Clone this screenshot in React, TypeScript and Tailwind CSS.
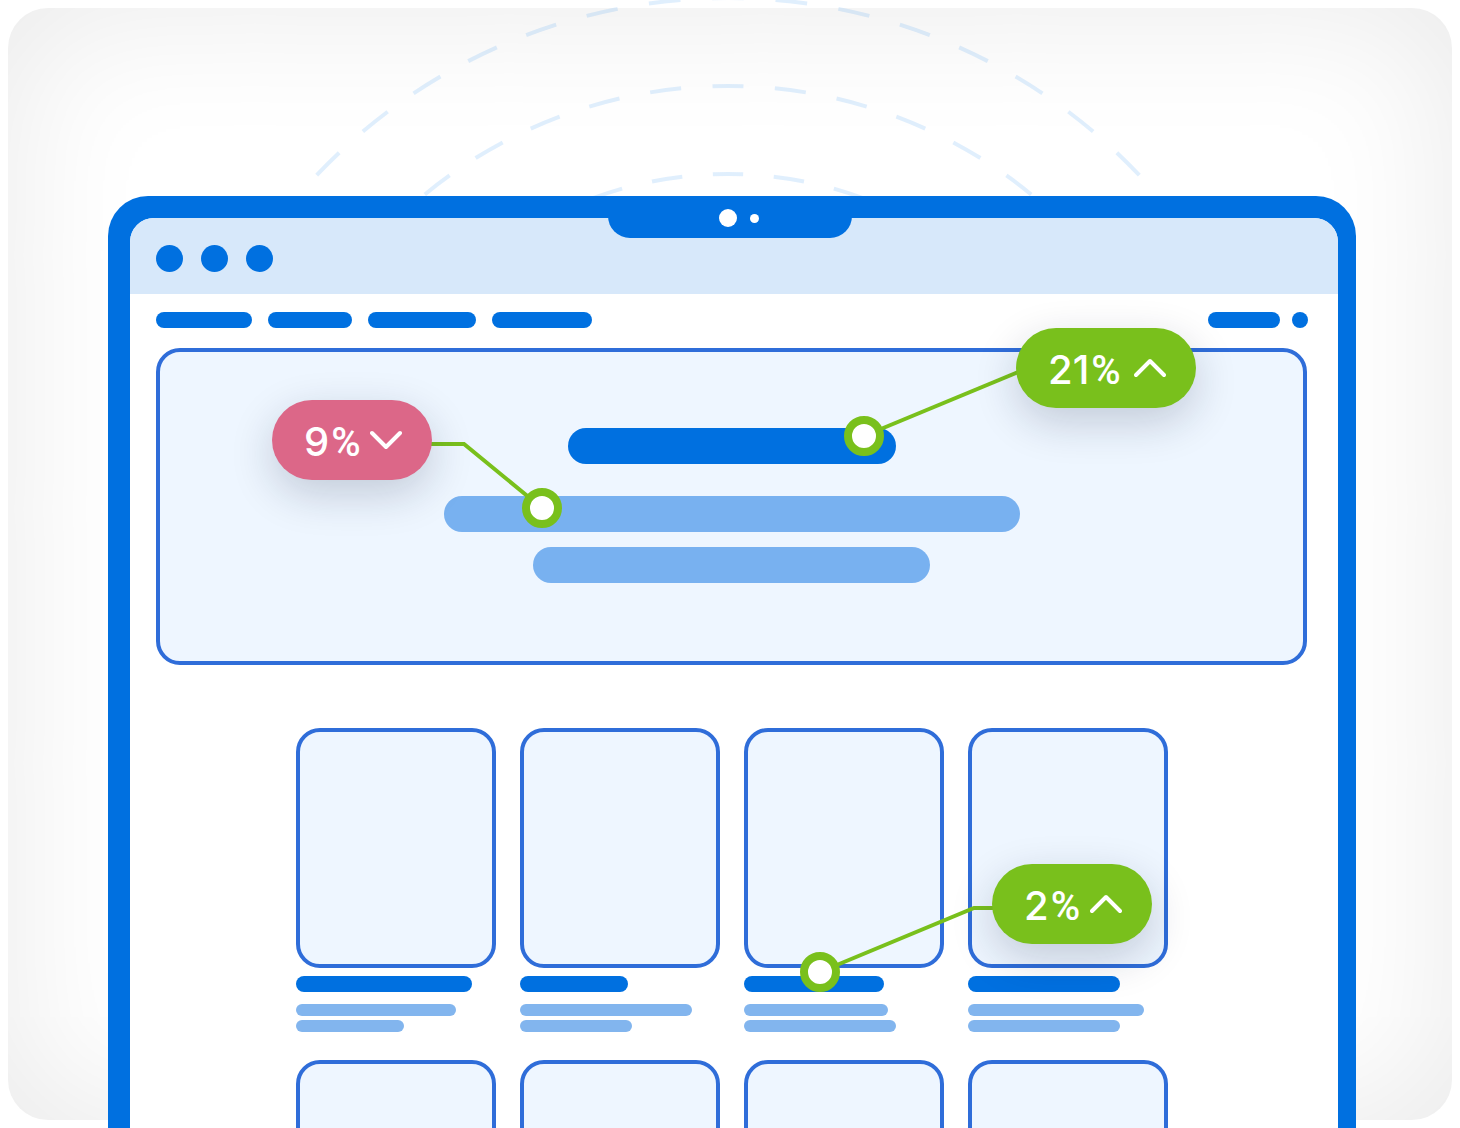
const CARDS = [
  { title: "w-[176px]", first: "w-[160px]", second: "w-[108px]" },
  { title: "w-[108px]", first: "w-[172px]", second: "w-[112px]" },
  { title: "w-[140px]", first: "w-[144px]", second: "w-[152px]" },
  { title: "w-[152px]", first: "w-[176px]", second: "w-[152px]" },
];

const NAV_ITEMS = ["w-[96px]", "w-[84px]", "w-[108px]", "w-[100px]"];

function Signals() {
  const rings = [
    { r: 390, units: 80 },
    { r: 478, units: 96 },
    { r: 566, units: 112 },
  ];
  return (
    <svg
      aria-hidden="true"
      className="absolute top-0 left-1/2 -translate-x-1/2"
      width="1460"
      height="400"
      viewBox="0 0 1460 400"
      fill="none"
    >
      {rings.map((ring) => (
        <circle
          key={ring.r}
          cx="728"
          cy="564"
          r={ring.r}
          pathLength={ring.units}
          strokeDasharray="1 1"
          strokeDashoffset="0.5"
          stroke="#0078ec"
          strokeOpacity="0.12"
          strokeWidth="4"
          transform="rotate(-90 728 564)"
        />
      ))}
    </svg>
  );
}

function Card({ title, first, second }: { title: string; first: string; second: string }) {
  return (
    <article className="flex flex-col">
      <div className="h-60 rounded-3xl border-4 border-[#2f6dd9] bg-[#eef6ff]" />
      <div className={`mt-2 h-4 rounded-full bg-[#0070e0] ${title}`} />
      <div className={`mt-3 h-3 rounded-full bg-[#82b5ee] ${first}`} />
      <div className={`mt-1 h-3 rounded-full bg-[#82b5ee] ${second}`} />
    </article>
  );
}

function Badge({ value, trend, place }: { value: string; trend: "up" | "down"; place: string }) {
  const tone = trend === "up" ? "bg-[#79c01c]" : "bg-[#dc6788]";
  return (
    <div
      className={`absolute flex h-20 items-center justify-between rounded-full pr-[30px] pl-8 shadow-[0_14px_44px_rgba(20,30,60,0.2)] ${tone} ${place}`}
    >
      <span className="flex items-baseline gap-0.5 pt-1 font-['Inter',sans-serif] text-[40px] leading-none font-medium text-white">
        {value}
        <span className="font-['Roboto',sans-serif]">%</span>
      </span>
      <svg
        aria-hidden="true"
        width="32"
        height="20"
        viewBox="0 0 32 20"
        fill="none"
        stroke="white"
        strokeWidth="4"
        strokeLinecap="round"
        strokeLinejoin="round"
      >
        <path d={trend === "up" ? "M2 17 L16 3 L30 17" : "M2 3 L16 17 L30 3"} />
      </svg>
    </div>
  );
}

function Callouts() {
  return (
    <div className="absolute top-0 left-1/2 h-[1128px] w-[1460px] -translate-x-1/2">
      <svg
        aria-hidden="true"
        className="absolute inset-0"
        width="1460"
        height="1128"
        viewBox="0 0 1460 1128"
        fill="none"
        stroke="#79c01c"
        strokeWidth="4"
      >
        <path d="M864 436 L1028 368" />
        <path d="M430 444 H464 L542 508" />
        <path d="M820 972 L974 908 H996" />
      </svg>
      <Badge value="21" trend="up" place="top-[328px] left-[1016px] w-[180px]" />
      <Badge value="9" trend="down" place="top-[400px] left-[272px] w-[160px]" />
      <Badge value="2" trend="up" place="top-[864px] left-[992px] w-[160px]" />
      <div className="absolute top-[416px] left-[844px] size-10 rounded-full border-8 border-[#79c01c] bg-white" />
      <div className="absolute top-[488px] left-[522px] size-10 rounded-full border-8 border-[#79c01c] bg-white" />
      <div className="absolute top-[952px] left-[800px] size-10 rounded-full border-8 border-[#79c01c] bg-white" />
    </div>
  );
}

function Notch() {
  return (
    <div className="absolute inset-x-0 top-[196px] flex justify-center">
      <div className="flex h-[42px] w-[244px] items-center gap-[13px] rounded-b-[22px] bg-[#0070e0] pt-0.5 pl-[111px]">
        <span className="size-[18px] rounded-full bg-white" />
        <span className="size-[9px] rounded-full bg-white" />
      </div>
    </div>
  );
}

function Browser() {
  return (
    <div className="overflow-hidden rounded-t-3xl bg-white">
      <header className="flex h-[76px] items-end gap-[18px] bg-[#d7e8fa] pb-[22px] pl-[26px]">
        <span className="size-[27px] rounded-full bg-[#0070e0]" />
        <span className="size-[27px] rounded-full bg-[#0070e0]" />
        <span className="size-[27px] rounded-full bg-[#0070e0]" />
      </header>
      <div className="pt-[18px] pr-[30px] pl-[26px]">
        <div className="flex justify-between">
          <div className="flex gap-4">
            {NAV_ITEMS.map((width) => (
              <span key={width} className={`h-4 rounded-full bg-[#0070e0] ${width}`} />
            ))}
          </div>
          <div className="flex gap-3">
            <span className="h-4 w-[72px] rounded-full bg-[#0070e0]" />
            <span className="size-4 rounded-full bg-[#0070e0]" />
          </div>
        </div>
        <section className="mt-5 mr-px flex flex-col items-center rounded-3xl border-4 border-[#2f6dd9] bg-[#eef6ff] pt-[76px] pb-[78px]">
          <div className="h-9 w-[328px] rounded-full bg-[#0070e0]" />
          <div className="mt-8 h-9 w-[576px] rounded-full bg-[#78b1f0]" />
          <div className="mt-[15px] h-9 w-[397px] rounded-full bg-[#78b1f0]" />
        </section>
        <section className="mt-[63px] grid grid-cols-[repeat(4,200px)] justify-center gap-x-6 gap-y-7">
          {CARDS.concat(CARDS).map((card, index) => (
            <Card key={index} {...card} />
          ))}
        </section>
      </div>
    </div>
  );
}

export default function App() {
  return (
    <main className="relative h-screen overflow-hidden bg-white">
      <div className="absolute inset-2 rounded-[40px] bg-white shadow-[inset_0_0_144px_rgba(0,0,0,0.09)]" />
      <Signals />
      <div className="relative pt-[196px] pr-26 pl-27">
        <div className="rounded-t-[40px] bg-[#0070e0] pt-[22px] pr-[18px] pl-[22px]">
          <Browser />
        </div>
        <Notch />
      </div>
      <Callouts />
    </main>
  );
}
